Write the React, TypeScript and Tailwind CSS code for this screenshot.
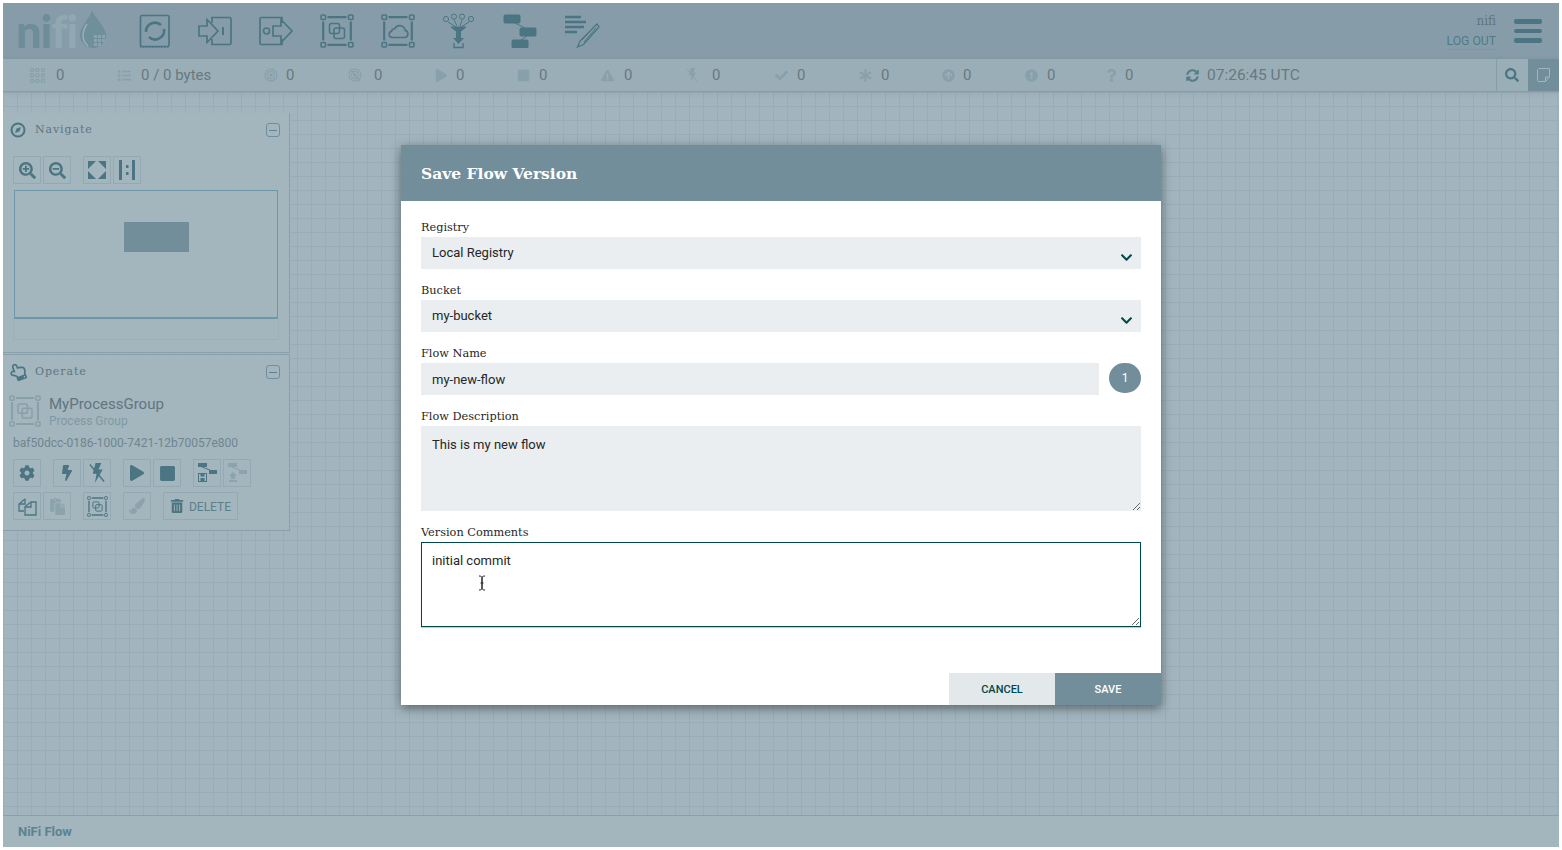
import React from "react";
import {
  FaAsterisk, FaBolt, FaCheck, FaChevronDown, FaCog, FaExclamationCircle, FaExclamationTriangle,
  FaArrowCircleUp, FaList, FaPaintBrush, FaPaste, FaPlay, FaQuestion, FaTrashAlt, FaSearch,
  FaSearchMinus, FaSearchPlus, FaStop, FaSyncAlt, FaRegHandPointUp,
} from "react-icons/fa";

const C = "#4b7582";

function GroupIcon({ size = 34, color = C }: { size?: number; color?: string }) {
  return (
    <svg width={size} height={size} viewBox="0 0 34 34" fill="none" stroke={color} strokeWidth="1.6">
      <rect x="1" y="1" width="4.5" height="4.5" rx="1" />
      <rect x="28.5" y="1" width="4.5" height="4.5" rx="1" />
      <rect x="1" y="28.5" width="4.5" height="4.5" rx="1" />
      <rect x="28.5" y="28.5" width="4.5" height="4.5" rx="1" />
      <path d="M7.5 3.2h19M7.5 30.8h19M3.2 7.5v19M30.8 7.5v19" strokeWidth="2.2" />
      <rect x="9.5" y="9.5" width="10" height="10" rx="2" />
      <rect x="14" y="14" width="10.5" height="10.5" rx="2" />
    </svg>
  );
}

function RemoteIcon() {
  return (
    <svg width="34" height="34" viewBox="0 0 34 34" fill="none" stroke={C} strokeWidth="1.6">
      <rect x="1" y="1" width="4.5" height="4.5" rx="1" />
      <rect x="28.5" y="1" width="4.5" height="4.5" rx="1" />
      <rect x="1" y="28.5" width="4.5" height="4.5" rx="1" />
      <rect x="28.5" y="28.5" width="4.5" height="4.5" rx="1" />
      <path d="M7.5 3.2h19M7.5 30.8h19M3.2 7.5v19M30.8 7.5v19" strokeWidth="2.2" />
      <path d="M11 23.5h12.5a3.6 3.6 0 0 0 .6-7.1 5.5 5.5 0 0 0-10.4-1.6 3.2 3.2 0 0 0-3.2 2.6 3.1 3.1 0 0 0 .5 6.1z" />
    </svg>
  );
}

function ProcessorIcon() {
  return (
    <svg width="32" height="34" viewBox="0 0 32 34" fill="none" stroke={C} strokeWidth="1.7">
      <rect x="1.5" y="1.5" width="28.5" height="31" rx="1.5" />
      <path d="M1 33h30" strokeDasharray="1.5 1.5" strokeWidth="1.4" />
      <path d="M7 18a9 9 0 0 1 15-7" strokeWidth="2.6" />
      <path d="M25 15a9 9 0 0 1-15 8" strokeWidth="2.6" />
    </svg>
  );
}

function InputPortIcon() {
  return (
    <svg width="34" height="30" viewBox="0 0 34 30" fill="none" stroke={C} strokeWidth="1.7">
      <path d="M14 7V1.5h17.5a1.5 1.5 0 0 1 1.5 1.5v24a1.5 1.5 0 0 1-1.5 1.5H14V23" />
      <path d="M1 10h8V3.5L20 15 9 26.5V20H1z" />
      <path d="M25 11v8" strokeWidth="2" />
    </svg>
  );
}

function OutputPortIcon() {
  return (
    <svg width="34" height="30" viewBox="0 0 34 30" fill="none" stroke={C} strokeWidth="1.7">
      <path d="M23 7V1.5H2.5A1.5 1.5 0 0 0 1 3v24a1.5 1.5 0 0 0 1.5 1.5H23V23" />
      <circle cx="7.5" cy="15" r="3" />
      <path d="M14 10h8V3.5L33 15 22 26.5V20h-8z" />
    </svg>
  );
}

function FunnelIcon() {
  return (
    <svg width="34" height="36" viewBox="0 0 34 36" fill="none" stroke={C} strokeWidth="1">
      <circle cx="4" cy="6" r="2.6" />
      <circle cx="12" cy="3.6" r="2.6" />
      <circle cx="20" cy="3.6" r="2.6" />
      <circle cx="29" cy="6" r="2.6" />
      <path d="M6 9l8 5M12 7l3 6M20 7l-2 6M27 9l-8 5" />
      <path d="M9 14h15l-5 4h-5z" fill={C} />
      <path d="M14 18h5v7h3l-5.5 6-5.5-6h3z" fill={C} stroke="none" />
      <path d="M12 30v4.5h9V30" strokeWidth="1.4" />
    </svg>
  );
}

function TemplateIcon({ w = 34, h = 34, color = C }: { w?: number; h?: number; color?: string }) {
  return (
    <svg width={w} height={h} viewBox="0 0 34 34" fill={color} stroke={color}>
      <rect x="1" y="1" width="16" height="8" rx="1" />
      <rect x="17" y="14" width="16" height="8" rx="1" />
      <rect x="9" y="26" width="16" height="8" rx="1" />
      <path d="M12 9l10 5M24 22l-6 4" fill="none" strokeWidth="1" />
    </svg>
  );
}

function LabelIcon() {
  return (
    <svg width="36" height="34" viewBox="0 0 36 34" fill="none" stroke={C}>
      <path d="M1 3h16M1 8h21M1 13h19M1 18h12" strokeWidth="2.4" />
      <path d="M33 10L16 27l-2.5 6 6-2.5L35 13z" strokeWidth="1.3" />
      <path d="M29 14L18 26M32 14L20 28" strokeWidth="1" />
    </svg>
  );
}

function Logo() {
  return (
    <div className="flex items-center w-[100px] ml-[13px]">
      <span className="text-[45px] leading-[44px] font-black tracking-[-1px] text-[#6d8d99] font-['Lato',sans-serif]">
        ni<span className="text-[#8fa8b2]">fi</span>
      </span>
      <svg width="28" height="38" viewBox="0 0 28 38" className="ml-[2px] -mt-[4px]">
        <path d="M13 0C15 7 27 17 27 25a13 13 0 0 1-26 0C1 17 11 8 13 0z" fill="#6f8f9b" />
        <path d="M8 14C3 21 2 30 9 36" fill="none" stroke="#9cb1ba" strokeWidth="1.4" />
        <g fill="#8aa3ad">
          <rect x="15" y="25" width="3" height="3" /><rect x="19" y="25" width="3" height="3" /><rect x="23" y="25" width="3" height="3" />
          <rect x="15" y="29" width="3" height="3" /><rect x="19" y="29" width="3" height="3" /><rect x="23" y="29" width="3" height="3" />
          <rect x="15" y="33" width="3" height="3" /><rect x="19" y="33" width="3" height="3" />
        </g>
      </svg>
    </div>
  );
}

function Target({ slash = false }: { slash?: boolean }) {
  return (
    <svg width="14" height="14" viewBox="0 0 14 14" fill="none" stroke="#87a0aa" strokeWidth="1.1">
      <circle cx="7" cy="7" r="6" />
      <circle cx="7" cy="7" r="3.6" />
      <circle cx="7" cy="7" r="1.2" fill="#87a0aa" />
      {slash && <path d="M2 1l10 12" />}
    </svg>
  );
}

function ClusterDots() {
  const pts = [2, 7.5, 13];
  return (
    <svg width="15" height="15" viewBox="0 0 15 15" fill="none" stroke="#87a0aa" strokeWidth="1.2">
      {pts.map((y) => pts.map((x) => <circle key={`${x}-${y}`} cx={x} cy={y} r="1.7" />))}
    </svg>
  );
}

function BoltSlash({ color = "#87a0aa", size = 14 }: { color?: string; size?: number }) {
  return (
    <svg width={size} height={size} viewBox="0 0 14 14" fill={color} stroke={color}>
      <path d="M6 0h4L8 4.5h3L5.5 14l1.2-6.5H4z" stroke="none" />
      <path d="M2 1l10 12" strokeWidth="1" />
    </svg>
  );
}

const ic = "text-[#87a0aa] text-[13px]";
const statuses: { w: string; ml: string; icon: React.ReactNode; text: string }[] = [
  { w: "w-[113px] pl-[26px]", ml: "ml-[11px]", icon: <ClusterDots />, text: "0" },
  { w: "w-[147px]", ml: "ml-[9px]", icon: <FaList className={ic} />, text: "0 / 0 bytes" },
  { w: "w-[84px]", ml: "ml-[7px]", icon: <Target />, text: "0" },
  { w: "w-[86px]", ml: "ml-[11px]", icon: <Target slash />, text: "0" },
  { w: "w-[82px]", ml: "ml-[7px]", icon: <FaPlay className={ic} />, text: "0" },
  { w: "w-[84px]", ml: "ml-[8px]", icon: <FaStop className={ic} />, text: "0" },
  { w: "w-[85px]", ml: "ml-[9px]", icon: <FaExclamationTriangle className={ic} />, text: "0" },
  { w: "w-[89px]", ml: "ml-[12px]", icon: <BoltSlash />, text: "0" },
  { w: "w-[84px]", ml: "ml-[8px]", icon: <FaCheck className={ic} />, text: "0" },
  { w: "w-[83px]", ml: "ml-[8px]", icon: <FaAsterisk className={ic} />, text: "0" },
  { w: "w-[83px]", ml: "ml-[7px]", icon: <FaArrowCircleUp className={ic} />, text: "0" },
  { w: "w-[80px]", ml: "ml-[8px]", icon: <FaExclamationCircle className={ic} />, text: "0" },
  { w: "w-[83px]", ml: "ml-[6px]", icon: <FaQuestion className={ic} />, text: "0" },
];

function Btn({ children, className = "w-[28px]" }: { children: React.ReactNode; className?: string }) {
  return (
    <div className={`h-[28px] border border-[#93a9b3] flex items-center justify-center ${className}`}>
      {children}
    </div>
  );
}

function Minus() {
  return (
    <div className="w-[14px] h-[14px] rounded-[3px] border border-[#6f8f9c] flex items-center justify-center">
      <div className="w-[8px] h-[1px] bg-[#5f8290]" />
    </div>
  );
}

function PanelHead({ icon, title }: { icon: React.ReactNode; title: string }) {
  return (
    <div className="h-[34px] flex items-center pl-[6px] pr-[9px]">
      <div className="w-[18px] flex justify-center">{icon}</div>
      <span className="ml-[8px] mt-[1px] font-['DejaVu_Serif',serif] text-[11px] tracking-[0.9px] text-[#5f7681]">{title}</span>
      <div className="ml-auto"><Minus /></div>
    </div>
  );
}

function Compass() {
  return (
    <svg width="16" height="16" viewBox="0 0 16 16" fill="none" stroke="#4b7582">
      <circle cx="8" cy="8" r="6.5" strokeWidth="2" />
      <path d="M10.5 5.5L9.2 9.2 5.5 10.5 6.8 6.8z" fill="#4b7582" strokeWidth="0.6" />
    </svg>
  );
}

function Navigate() {
  return (
    <div className="w-[287px] h-[240px] bg-[#a3b5bd] border-r border-b border-[#8aa1ac]">
      <PanelHead icon={<Compass />} title="Navigate" />
      <div className="pl-[10px] pt-[9px]">
        <div className="flex">
          <Btn><FaSearchPlus className="text-[17px] text-[#4b7582]" /></Btn>
          <Btn className="w-[28px] ml-[2px]"><FaSearchMinus className="text-[17px] text-[#4b7582]" /></Btn>
          <Btn className="w-[28px] ml-[12px]">
            <svg width="18" height="18" viewBox="0 0 18 18" fill="#4b7582">
              <path d="M0 0h8L0 8zM18 0h-8l8 8zM0 18h8l-8-8zM18 18h-8l8-8z" />
            </svg>
          </Btn>
          <Btn className="w-[28px] ml-[2px]">
            <svg width="18" height="20" viewBox="0 0 18 20" fill="#4b7582">
              <rect x="1" y="0" width="3" height="20" /><rect x="14" y="0" width="3" height="20" />
              <rect x="8" y="5" width="2.5" height="3" /><rect x="8" y="12" width="2.5" height="3" />
            </svg>
          </Btn>
        </div>
        <div className="w-[264px] h-[129px] ml-[1px] mt-[6px] border border-[#6f95a9] border-b-2 flex justify-center">
          <div className="w-[65px] h-[30px] mt-[31px] ml-[21px] bg-[#728e9b]" />
        </div>
        <div className="w-[266px] h-[21px] border border-[#9cb0b9] border-t-0" />
      </div>
    </div>
  );
}

function Operate() {
  return (
    <div className="w-[287px] h-[177px] mt-[1px] bg-[#a3b5bd] border-t border-r border-b border-[#8aa1ac]">
      <PanelHead icon={<FaRegHandPointUp className="text-[#4b7582] text-[18px] -rotate-[20deg]" />} title="Operate" />
      <div className="flex pl-[6px] mt-[6px]">
        <GroupIcon size={32} color="#87a0aa" />
        <div className="ml-[8px] font-['Roboto',sans-serif] mt-[1px]">
          <div className="text-[15px] leading-[17px] text-[#5f7681]">MyProcessGroup</div>
          <div className="text-[12px] leading-[16px] text-[#7f99a4]">Process Group</div>
        </div>
      </div>
      <div className="ml-[10px] mt-[6px] text-[12px] leading-[16px] text-[#6f8590] font-['Roboto',sans-serif]">baf50dcc-0186-1000-7421-12b70057e800</div>
      <div className="ml-[10px] mt-[8px] flex">
        <Btn><FaCog className="text-[16px] text-[#4b7582]" /></Btn>
        <Btn className="w-[28px] ml-[12px]"><FaBolt className="text-[16px] text-[#4b7582]" /></Btn>
        <Btn className="w-[28px] ml-[2px]"><BoltSlash color="#4b7582" size={20} /></Btn>
        <Btn className="w-[28px] ml-[12px]"><FaPlay className="text-[16px] text-[#4b7582]" /></Btn>
        <Btn className="w-[28px] ml-[2px]"><FaStop className="text-[17px] text-[#4b7582]" /></Btn>
        <Btn className="w-[28px] ml-[12px]">
          <svg width="20" height="20" viewBox="0 0 20 20" fill="#4b7582">
            <rect x="1" y="0" width="9" height="4" /><rect x="12" y="7" width="8" height="4" />
            <path d="M5 4l8 3" stroke="#4b7582" fill="none" />
            <rect x="1.5" y="10.5" width="8" height="8" fill="none" stroke="#4b7582" />
            <rect x="3.5" y="11" width="4" height="2.5" /><rect x="3.5" y="15" width="4" height="3.5" />
          </svg>
        </Btn>
        <Btn className="w-[28px] ml-[2px]">
          <svg width="20" height="20" viewBox="0 0 20 20" fill="#8aa3ad">
            <rect x="1" y="0" width="9" height="4" /><rect x="12" y="7" width="8" height="4" />
            <path d="M5 4l8 3" stroke="#8aa3ad" fill="none" />
            <path d="M6 9l4 4H8v3H4v-3H2z" /><rect x="2" y="17" width="8" height="2" />
          </svg>
        </Btn>
      </div>
      <div className="ml-[10px] mt-[5px] flex">
        <Btn>
          <svg width="19" height="19" viewBox="0 0 19 19" fill="none" stroke="#4b7582" strokeWidth="1.3">
            <path d="M7 2L1 7v7h5" /><path d="M7 2v5H1" />
            <path d="M13 5L7 9.5V18h11V5z" /><path d="M13 5v5H7" />
          </svg>
        </Btn>
        <Btn className="w-[28px] ml-[2px]"><FaPaste className="text-[17px] text-[#8aa3ad]" /></Btn>
        <Btn className="w-[28px] ml-[12px]"><GroupIcon size={21} /></Btn>
        <Btn className="w-[28px] ml-[12px]"><FaPaintBrush className="text-[16px] text-[#8aa3ad]" /></Btn>
        <Btn className="w-[75px] ml-[12px]">
          <FaTrashAlt className="text-[14px] text-[#4b7582]" />
          <span className="ml-[5px] mt-[2px] text-[12px] text-[#5c7f8c] font-['Roboto',sans-serif]">DELETE</span>
        </Btn>
      </div>
    </div>
  );
}

function Field({ label, children }: { label: string; children: React.ReactNode }) {
  return (
    <div>
      <div className="h-[16px] text-[11.3px] leading-[14px] text-[#262626] font-['DejaVu_Serif',serif]">{label}</div>
      {children}
    </div>
  );
}

function Combo({ text }: { text: string }) {
  return (
    <div className="h-[32px] bg-[#eaeef0] pl-[11px] pr-[8px] flex items-center justify-between text-[13px] text-[#262626]">
      <span className="-mt-[1px]">{text}</span>
      <FaChevronDown className="text-[13px] text-[#004849] mt-[8px]" />
    </div>
  );
}

function Dialog() {
  return (
    <div className="absolute left-[398px] top-[142px] w-[760px] h-[560px] bg-white flex flex-col shadow-[0_3px_10px_rgba(0,0,0,0.45)] font-['Roboto',sans-serif]">
      <div className="h-[56px] bg-[#728e9b] flex items-center pt-[2px] pl-[20px] text-white text-[15.5px] font-bold font-['DejaVu_Serif',serif]">
        Save Flow Version
      </div>
      <div className="flex-1 pt-[20px] px-[20px] flex flex-col gap-[15px]">
        <Field label="Registry"><Combo text="Local Registry" /></Field>
        <Field label="Bucket"><Combo text="my-bucket" /></Field>
        <Field label="Flow Name">
          <div className="flex items-start justify-between">
            <div className="w-[678px] h-[32px] bg-[#eaeef0] pl-[11px] pt-[1px] flex items-center text-[13px] text-[#262626]">my-new-flow</div>
            <div className="w-[32px] h-[30px] rounded-full bg-[#728e9b] text-white text-[12px] flex items-center justify-center">1</div>
          </div>
        </Field>
        <Field label="Flow Description">
          <textarea
            readOnly
            defaultValue="This is my new flow"
            className="block w-full h-[85px] bg-[#eaeef0] pl-[11px] pt-[11px] text-[13px] leading-[16px] text-[#262626] outline-none"
          />
        </Field>
        <Field label="Version Comments">
          <textarea
            readOnly
            defaultValue="initial commit"
            className="block w-full h-[85px] bg-white border border-[#004849] shadow-[0_1px_1px_rgba(0,0,0,0.2)] pl-[10px] pt-[10px] text-[13px] leading-[16px] text-[#262626] outline-none"
          />
        </Field>
      </div>
      <div className="h-[32px] flex justify-end text-[11px] font-medium">
        <div className="w-[106px] pt-[2px] bg-[#e3e8eb] text-[#004849] flex items-center justify-center">CANCEL</div>
        <div className="w-[106px] pt-[2px] bg-[#728e9b] text-white flex items-center justify-center">SAVE</div>
      </div>
    </div>
  );
}

function IBeam() {
  return (
    <svg className="absolute left-[475px] top-[572px]" width="8" height="16" viewBox="0 0 8 16" fill="none" stroke="#222" strokeWidth="1">
      <path d="M1 1c2 0 3 .5 3 2v10c0 1.5-1 2-3 2M7 1c-2 0-3 .5-3 2v10c0 1.5 1 2 3 2M2.5 8h3" />
    </svg>
  );
}

export default function App() {
  return (
    <div className="w-[1562px] h-[850px] bg-white p-[3px] overflow-hidden font-['Roboto',sans-serif]">
      <div className="relative w-[1556px] h-[844px] flex flex-col overflow-hidden">
        <header className="h-[56px] bg-[#869da9] flex items-center shrink-0">
          <Logo />
          <div className="flex items-center ml-[23px] gap-[27px]">
            <ProcessorIcon />
            <InputPortIcon />
            <OutputPortIcon />
            <GroupIcon />
            <RemoteIcon />
            <FunnelIcon />
            <TemplateIcon />
            <LabelIcon />
          </div>
          <div className="ml-auto flex items-center pr-[17px]">
            <div className="text-right mr-[18px]">
              <div className="text-[12px] leading-[16px] text-[#5f7681] font-['DejaVu_Serif',serif]">nifi</div>
              <div className="text-[12.2px] leading-[15px] mt-[5px] text-[#4f7a88] border-b border-[#7d97a3]">LOG OUT</div>
            </div>
            <div className="w-[28px] flex flex-col gap-[5px]">
              <div className="h-[4.5px] rounded-[2px] bg-[#4b7582]" />
              <div className="h-[4.5px] rounded-[2px] bg-[#4b7582]" />
              <div className="h-[4.5px] rounded-[2px] bg-[#4b7582]" />
            </div>
          </div>
        </header>
        <div className="relative z-10 h-[33px] bg-[#9aaeb7] border-b border-[#869eaa] shadow-[0_1px_6px_rgba(0,0,0,0.08)] flex items-center shrink-0 text-[15px] text-[#68797f]">
          {statuses.map((s, i) => (
            <div key={i} className={`flex items-center h-full ${s.w}`}>
              <span className="flex justify-center w-[16px]">{s.icon}</span>
              <span className={s.ml}>{s.text}</span>
            </div>
          ))}
          <div className="flex items-center">
            <FaSyncAlt className="text-[13px] text-[#557d8a]" />
            <span className="ml-[8px] mt-[1px] text-[15.5px]">07:26:45 UTC</span>
          </div>
          <div className="ml-auto h-full flex">
            <div className="w-[32px] h-full border-l border-[#869eaa] flex items-center justify-center">
              <FaSearch className="text-[14px] text-[#4b7582] -ml-[2px]" />
            </div>
            <div className="w-[31px] h-full bg-[#728e9b] flex items-center justify-center">
              <svg width="14" height="14" viewBox="0 0 14 14" fill="none" stroke="#a3b5bd" strokeWidth="1">
                <path d="M1.5.5h11v8l-4 5h-7a1 1 0 0 1-1-1V1.500z" /><path d="M12.5 9h-4v4" />
              </svg>
            </div>
          </div>
        </div>
        <main className="flex-1 min-h-0 bg-[#a2b5be] bg-[linear-gradient(to_right,#99adb6_1px,transparent_1px),linear-gradient(to_bottom,#99adb6_1px,transparent_1px)] bg-[size:14px_14px] pt-[21px]">
          <Navigate />
          <Operate />
        </main>
        <footer className="h-[32px] shrink-0 bg-[#a3b5bd] border-t border-[#8aa1ac] flex items-center pl-[15px] text-[13px] font-bold text-[#5a8390]">
          NiFi Flow
        </footer>
        <Dialog />
        <IBeam />
      </div>
    </div>
  );
}
